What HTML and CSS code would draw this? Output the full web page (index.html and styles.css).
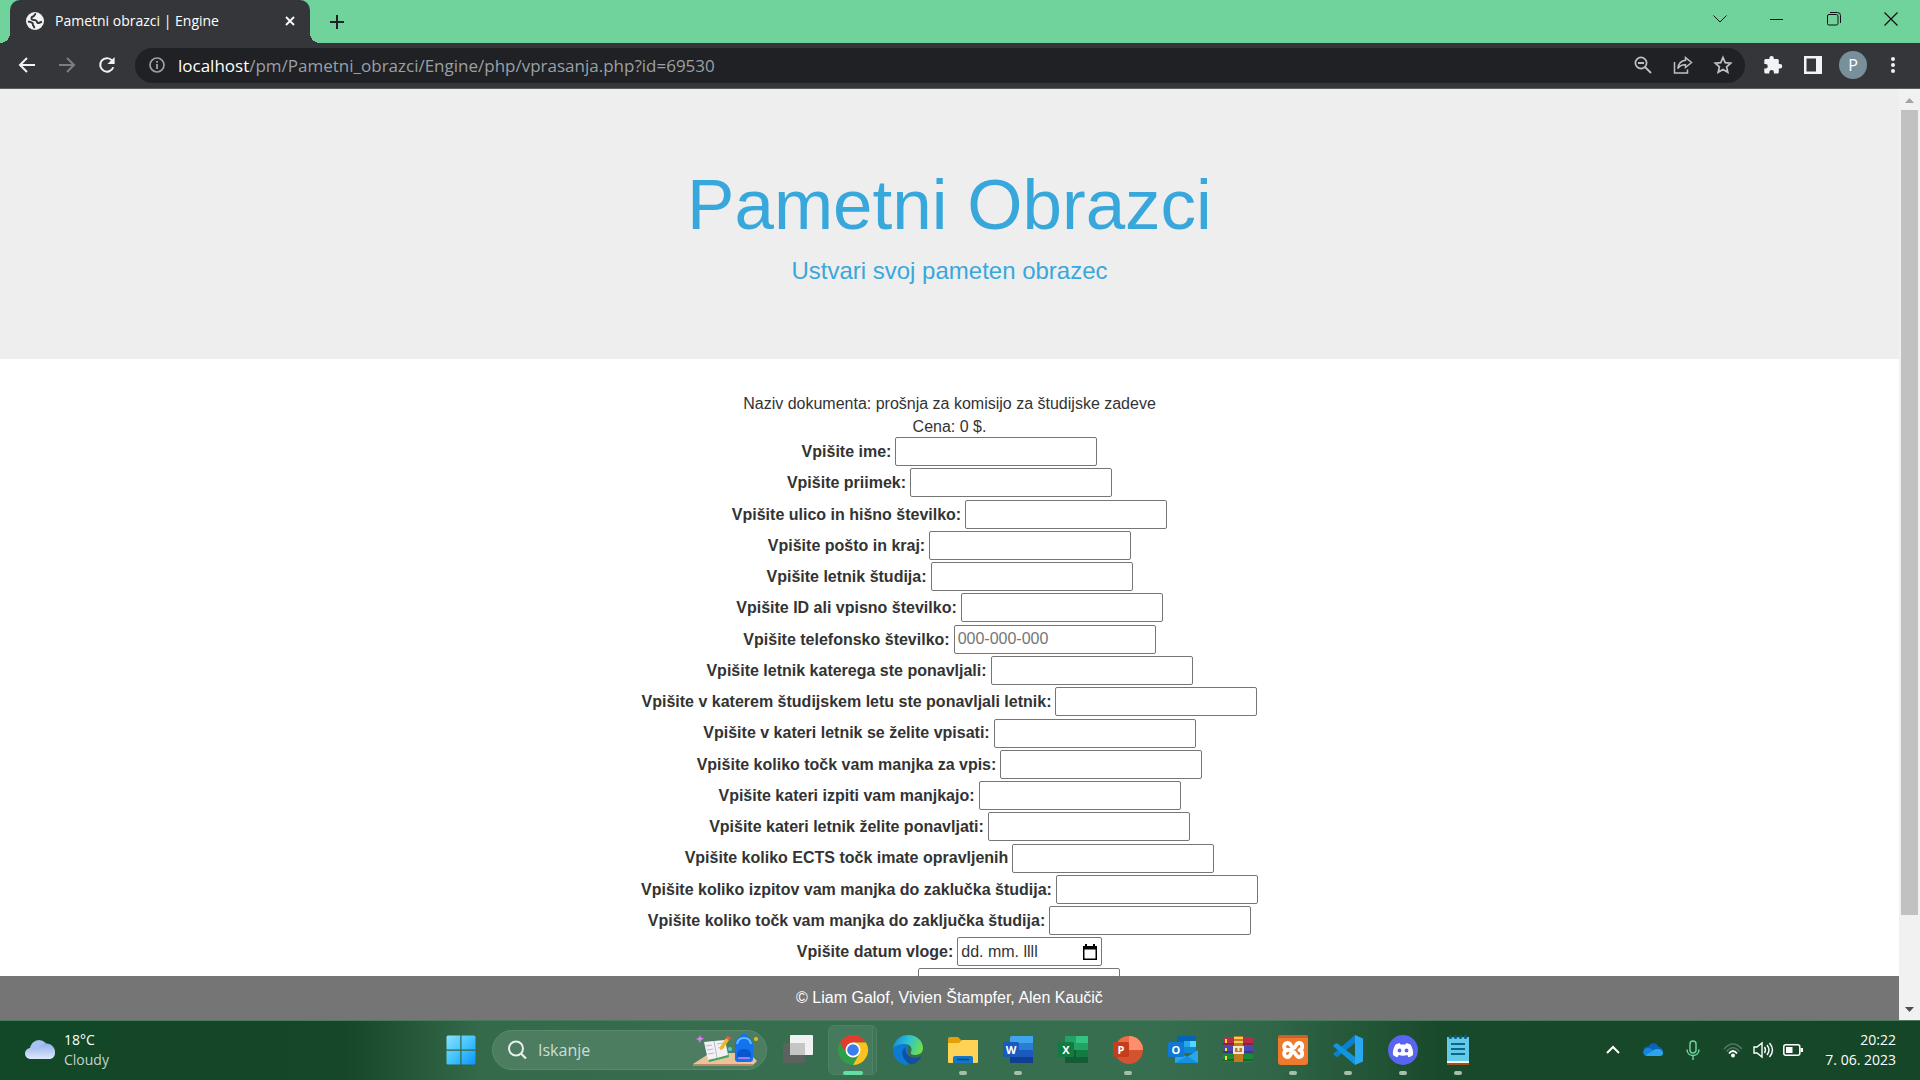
FILE: index.html
```html
<!DOCTYPE html>
<html lang="sl">
<head>
<meta charset="utf-8">
<title>Pametni obrazci | Engine</title>
<link rel="stylesheet" href="styles.css">
</head>
<body>
<header class="tabstrip">
  <div class="tab">
    <svg class="favicon" width="18" height="18" viewBox="0 0 18 18"><circle cx="9" cy="9" r="9" fill="#f1f3f4"/><path d="M10 1.800c-2 .4-1 2.200-3 2.700C5.200 5 5 6.800 6.200 7.600c1.200.6 2.600.2 3.800.9 1.300.9.6 2 1.800 2.500 1.200.3 2.400-.8 4.200-1.200M2 9.400c1.600.2 3.200.5 4.500 1.600 1 1-.2 1.800.8 2.600 1 .6 1 1.400 1 2.600" fill="none" stroke="#35363a" stroke-width="2"/></svg>
    <span class="tab-title">Pametni obrazci | Engine</span>
    <button class="icon-button tab-close" aria-label="Zapri zavihek"><svg width="10" height="10" viewBox="0 0 10 10"><path d="M1 1l8 8M9 1l-8 8" stroke="#fff" stroke-width="1.800"/></svg></button>
  </div>
  <button class="icon-button new-tab" aria-label="Nov zavihek"><svg width="16" height="16" viewBox="0 0 16 16"><path d="M8 1v14M1 8h14" stroke="#202124" stroke-width="2"/></svg></button>
  <div class="window-controls">
    <button class="icon-button" aria-label="Iskanje zavihkov"><svg width="14" height="8" viewBox="0 0 14 8"><path d="M.5.5L7 7 13.500.5" fill="none" stroke="#111"/></svg></button>
    <button class="icon-button" aria-label="Minimiraj"><svg width="13" height="8" viewBox="0 0 13 8"><path d="M0 4.500h13" stroke="#111"/></svg></button>
    <button class="icon-button" aria-label="Obnovi"><svg width="14" height="14" viewBox="0 0 14 14"><g fill="none" stroke="#111"><rect x=".5" y="2.500" width="10.500" height="10.500" rx="1.500"/><path d="M3 .5h7.500q3 0 3 3V11"/></g></svg></button>
    <button class="icon-button" aria-label="Zapri"><svg width="14" height="14" viewBox="0 0 14 14"><path d="M.5.5l13 13M13.500.5l-13 13" stroke="#111" stroke-width="1.200"/></svg></button>
  </div>
</header>

<nav class="toolbar">
  <button class="icon-button nav-button" aria-label="Nazaj"><svg width="18" height="18" viewBox="0 0 18 18"><path d="M17 9H2M9 2L2 9l7 7" fill="none" stroke="#f1f3f4" stroke-width="2"/></svg></button>
  <button class="icon-button nav-button" aria-label="Naprej"><svg width="18" height="18" viewBox="0 0 18 18"><path d="M1 9h15M9 2l7 7-7 7" fill="none" stroke="#7d7e81" stroke-width="2"/></svg></button>
  <button class="icon-button nav-button" aria-label="Osveži"><svg width="18" height="18" viewBox="0 0 20 20"><path d="M17 12.500A7.500 7.500 0 1 1 15.500 4.800" fill="none" stroke="#f1f3f4" stroke-width="2.200"/><path d="M18.500 1v8h-8z" fill="#f1f3f4"/></svg></button>
  <div class="omnibox">
    <svg width="18" height="18" viewBox="0 0 18 18"><circle cx="9" cy="9" r="7" fill="none" stroke="#9aa0a6" stroke-width="1.700"/><path d="M9 8v5M9 5v1.800" stroke="#9aa0a6" stroke-width="1.800"/></svg>
    <span class="url"><span class="host">localhost</span>/pm/Pametni_obrazci/Engine/php/vprasanja.php?id=69530</span>
    <span class="omnibox-actions">
      <button class="icon-button action" aria-label="Povečava"><svg width="18" height="18" viewBox="0 0 18 18"><circle cx="7" cy="7" r="5.600" fill="none" stroke="#bdc1c6" stroke-width="1.700"/><path d="M4 7h6M11 11l6 6" stroke="#bdc1c6" stroke-width="1.800"/></svg></button>
      <button class="icon-button action" aria-label="Deli"><svg width="20" height="20" viewBox="0 0 20 20"><g fill="none" stroke="#bdc1c6" stroke-width="1.500"><path d="M1.500 7v11h13v-3.500"/><path d="M12.500 2.500l6 5-6 5V9.800C9 9.700 6.500 11 4.800 13.500 5.500 8.500 8.500 5.700 12.500 5.300z"/></g></svg></button>
      <button class="icon-button action" aria-label="Dodaj zaznamek"><svg width="20" height="20" viewBox="0 0 20 20"><path d="M10 2.500l2.200 5.100 5.500.5-4.100 3.700 1.200 5.500L10 14.400l-4.800 2.900 1.200-5.500-4.100-3.700 5.500-.5z" fill="none" stroke="#bdc1c6" stroke-width="1.700"/></svg></button>
    </span>
  </div>
  <button class="icon-button nav-button" aria-label="Razširitve"><svg width="20" height="20" viewBox="0 0 20 20"><path d="M17 9h-1.200V5.600c0-.9-.7-1.600-1.600-1.600h-3.400V3.100a2.200 2.200 0 0 0-4.400 0V4H3C2 4 1.300 4.700 1.300 5.600v3.300h1.200a2.300 2.300 0 0 1 0 4.600H1.300v3.400c0 .9.700 1.600 1.700 1.600h3.300v-1.200a2.300 2.300 0 0 1 4.600 0v1.200h3.300c.9 0 1.600-.7 1.600-1.600v-3.400H17A2.200 2.200 0 0 0 17 9z" fill="#f1f3f4"/></svg></button>
  <button class="icon-button nav-button" aria-label="Stranska plošča"><svg width="18" height="18" viewBox="0 0 18 18"><path fill-rule="evenodd" d="M0 0h18v18H0zM2.500 2.500v13H12v-13z" fill="#f1f3f4"/></svg></button>
  <button class="icon-button nav-button" aria-label="Profil"><span class="avatar">P</span></button>
  <button class="icon-button nav-button" aria-label="Meni"><svg width="6" height="18" viewBox="0 0 6 18"><g fill="#f1f3f4"><circle cx="3" cy="3" r="2"/><circle cx="3" cy="9" r="2"/><circle cx="3" cy="15" r="2"/></g></svg></button>
</nav>

<div class="viewport">
  <div class="page">
    <main class="page-scroll">
      <section class="jumbotron">
        <h1>Pametni Obrazci</h1>
        <p class="lead">Ustvari svoj pameten obrazec</p>
      </section>
      <form class="questions">
        <p>Naziv dokumenta: prošnja za komisijo za študijske zadeve</p>
        <p>Cena: 0 $.</p>
        <div class="row"><label for="q1">Vpišite ime:</label><input class="field" id="q1" type="text"></div>
        <div class="row"><label for="q2">Vpišite priimek:</label><input class="field" id="q2" type="text"></div>
        <div class="row"><label for="q3">Vpišite ulico in hišno številko:</label><input class="field" id="q3" type="text"></div>
        <div class="row"><label for="q4">Vpišite pošto in kraj:</label><input class="field" id="q4" type="text"></div>
        <div class="row"><label for="q5">Vpišite letnik študija:</label><input class="field" id="q5" type="text"></div>
        <div class="row"><label for="q6">Vpišite ID ali vpisno številko:</label><input class="field" id="q6" type="text"></div>
        <div class="row"><label for="q7">Vpišite telefonsko številko:</label><input class="field" id="q7" type="tel" placeholder="000-000-000"></div>
        <div class="row"><label for="q8">Vpišite letnik katerega ste ponavljali:</label><input class="field" id="q8" type="text"></div>
        <div class="row"><label for="q9">Vpišite v katerem študijskem letu ste ponavljali letnik:</label><input class="field" id="q9" type="text"></div>
        <div class="row"><label for="q10">Vpišite v kateri letnik se želite vpisati:</label><input class="field" id="q10" type="text"></div>
        <div class="row"><label for="q11">Vpišite koliko točk vam manjka za vpis:</label><input class="field" id="q11" type="text"></div>
        <div class="row"><label for="q12">Vpišite kateri izpiti vam manjkajo:</label><input class="field" id="q12" type="text"></div>
        <div class="row"><label for="q13">Vpišite kateri letnik želite ponavljati:</label><input class="field" id="q13" type="text"></div>
        <div class="row"><label for="q14">Vpišite koliko ECTS točk imate opravljenih</label><input class="field" id="q14" type="text"></div>
        <div class="row"><label for="q15">Vpišite koliko izpitov vam manjka do zaklučka študija:</label><input class="field" id="q15" type="text"></div>
        <div class="row"><label for="q16">Vpišite koliko točk vam manjka do zaključka študija:</label><input class="field" id="q16" type="text"></div>
        <div class="row"><label for="q17">Vpišite datum vloge:</label><span class="field date-field"><input id="q17" type="text" placeholder="dd. mm. llll"><button type="button" class="icon-button" aria-label="Odpri koledar"><svg width="14" height="16" viewBox="0 0 14 16"><path fill-rule="evenodd" d="M0 2h2V0h2v2h6V0h2v2h2v14H0zM1.500 5.500v9h11v-9z" fill="#000"/></svg></button></span></div>
        <div class="row last"><input class="field" id="q18" type="text" aria-label="Vpišite kraj vloge"></div>
      </form>
    </main>
    <footer class="page-footer">© Liam Galof, Vivien Štampfer, Alen Kaučič</footer>
  </div>
  <div class="scrollbar">
    <svg width="9" height="5" viewBox="0 0 9 5"><path d="M0 5L4.500 0 9 5z" fill="#a3a3a3"/></svg>
    <div class="thumb"></div>
    <svg width="9" height="5" viewBox="0 0 9 5"><path d="M0 0l4.500 5L9 0z" fill="#505050"/></svg>
  </div>
</div>

<div class="taskbar">
  <div class="weather">
    <svg width="30" height="20" viewBox="0 0 30 20"><defs><linearGradient id="cloud" x1="0" y1="0" x2="0" y2="1"><stop offset="0" stop-color="#8fb0ec"/><stop offset="1" stop-color="#dfe8fb"/></linearGradient></defs><circle cx="14" cy="9" r="9" fill="#a9c2f3"/><path d="M6 8a6 6 0 0 1 7 3 8 8 0 0 1 17 2c0 4-3 6-6 6H6C-2 19-2 8 6 8z" fill="url(#cloud)"/></svg>
    <div class="two-lines"><span>18°C</span><span class="muted">Cloudy</span></div>
  </div>
  <div class="apps">
    <button class="app" aria-label="Začetek"><svg width="30" height="30" viewBox="0 0 30 30"><defs><linearGradient id="win" x1="0" y1="0" x2="1" y2="1"><stop offset="0" stop-color="#8ae2ff"/><stop offset=".5" stop-color="#45c4fb"/><stop offset="1" stop-color="#0a94fb"/></linearGradient></defs><path d="M2 .5h12.300v14H.5V2Q.5.5 2 .5zM15.500.5H28q1.500 0 1.500 1.500v12.500h-14zM.5 15.700h13.800v13.800H2Q.5 29.500.5 28zM15.500 15.700h14V28q0 1.500-1.500 1.500H15.500z" fill="url(#win)"/></svg></button>
    <label class="search">
      <svg width="20" height="20" viewBox="0 0 20 20"><circle cx="9" cy="8.500" r="7" fill="none" stroke="#e8eeea" stroke-width="2"/><path d="M14 13.500l5 5" stroke="#e8eeea" stroke-width="2.200"/></svg>
      <input type="text" placeholder="Iskanje" aria-label="Iskanje">
      <svg width="66" height="34" viewBox="0 0 66 34"><path d="M0 31L17 20h39l8 8-4 4H0z" fill="#e9c39b"/><path d="M0 31h60v2H0z" fill="#b98a62"/><path d="M7 2l1 2.500L11 5.500 8 7 7 10 5.500 7 3 6l3-1.500z" fill="#e07cf5"/><path d="M12 12l21-4 3 16-20 5z" fill="#3fa35a"/><path d="M11 9l10-1 11-1 3 15-11 3-9 2z" fill="#f3f1f6"/><path d="M21 8l3 17M13 13l6-1M14 17l6-1M15 21l6-1M24 11l6-1M25 15l6-1" stroke="#b9b7c7"/><path d="M27 14l6-9 3 2-6 9-3 1z" fill="#f7b32b"/><path d="M33 5l1.500-2.500L38 5l-1.700 2.500z" fill="#e85a45"/><path d="M48 3V1h6v2q6 3 6 9v14q0 3-3 3H45q-3 0-3-3V12q0-6 6-9z" fill="#1272ef"/><path d="M44 11q1-6 7-6t7 6" fill="none" stroke="#65bafc" stroke-width="2"/><path d="M44 25v-4q1-5 7-5t7 5v4z" fill="#0957cc"/><path d="M45 25h12" stroke="#a47bf7" stroke-width="2"/><circle cx="37" cy="16" r="2" fill="#52cbd3"/><circle cx="63" cy="6" r="2" fill="#f5b914"/></svg>
    </label>
    <button class="app" aria-label="Pogled opravil"><svg width="30" height="30" viewBox="0 0 30 30"><rect y="8" width="22" height="20" rx="1" fill="#5d615f"/><rect x="7" y="0" width="23" height="20" rx="1" fill="#f0f1f0"/><path d="M7 8h15v12H7z" fill="#c3c6c4"/></svg></button>
    <button class="app current" aria-label="Chrome"><svg width="30" height="30" viewBox="0 0 30 30"><circle cx="15" cy="15" r="15" fill="#2f9e4b"/><path d="M2 7.500A15 15 0 0 1 28 7.500H15L8.500 18.800z" fill="#e33b2e"/><path d="M28 7.500A15 15 0 0 1 15 30l6.500-11.300L15 7.500z" fill="#fcc31e"/><circle cx="15" cy="15" r="7.500" fill="#fff"/><circle cx="15" cy="15" r="5.800" fill="#3b7ded"/></svg></button>
    <button class="app" aria-label="Edge"><svg width="30" height="30" viewBox="0 0 30 30"><defs><linearGradient id="edge" x1="0" y1=".2" x2="1" y2=".5"><stop offset="0" stop-color="#1588d8"/><stop offset=".5" stop-color="#2fc3d4"/><stop offset="1" stop-color="#6be04d"/></linearGradient></defs><path d="M0 13c1-5 6-6 10-5 4 0 6 4 4 8l3 9-2 5C6 30-1 22 0 13z" fill="#0c7bd6"/><path d="M0 13C2 4 8 0 15 0c9 0 15 6 15 13 0 5-4 7-8 7-3 0-5-1-4-3 2-4-1-8-6-8C6 9 2 11 0 13z" fill="url(#edge)"/><path d="M12.500 12c-4 3-4 8-1 12 2 3 5 5.500 7.500 5.500 4-1 7-4 9-7 0-1-.6-1-1-.8-8 3.500-16-2-14.500-9.700z" fill="#124f9f"/></svg></button>
    <button class="app open" aria-label="Raziskovalec"><svg width="30" height="30" viewBox="0 0 30 30"><path d="M0 4q0-2 2-2h8l4 4v6H0z" fill="#e3a008"/><path d="M0 8h11l3-3h16v22q0 1-1 1H1q-1 0-1-1z" fill="#fed255"/><path d="M5 28v-5q0-2 2-2h16q2 0 2 2v5z" fill="#1277c9"/><path d="M9 24.500h12" stroke="#0a477f" stroke-width="1.500"/></svg></button>
    <button class="app open" aria-label="Word"><svg width="30" height="30" viewBox="0 0 30 30"><path d="M7 3q0-2 1.500-2H30v7H7z" fill="#41a5ee"/><path d="M7 8h23v7H7z" fill="#2b7cd3"/><path d="M7 15h23v7H7z" fill="#185abd"/><path d="M7 22h23v6H8q-1 0-1-1z" fill="#103f91"/><rect y="7" width="16" height="15" rx="1.500" fill="#185abd"/><text class="glyph" x="8" y="18.500">W</text></svg></button>
    <button class="app" aria-label="Excel"><svg width="30" height="30" viewBox="0 0 30 30"><path d="M7 1h12v14H7z" fill="#21a366"/><path d="M18 1h12v7H18z" fill="#33c481"/><path d="M18 8h12v7H18z" fill="#21a366"/><path d="M7 15h11v13H7z" fill="#185c37"/><path d="M18 15h12v7H18z" fill="#107c41"/><path d="M18 22h12v6H18z" fill="#185c37"/><rect y="7" width="16" height="15" rx="1.500" fill="#107c41"/><text class="glyph" x="8" y="18.500">X</text></svg></button>
    <button class="app open" aria-label="PowerPoint"><svg width="30" height="30" viewBox="0 0 30 30"><circle cx="16" cy="15" r="14" fill="#d35230"/><path d="M16 1A14 14 0 0 0 2 15h14z" fill="#ed6c47"/><path d="M16 1a14 14 0 0 1 14 14H16z" fill="#ff8f6b"/><rect y="7" width="16" height="15" rx="1.500" fill="#c43e1c"/><text class="glyph" x="8" y="18.500">P</text></svg></button>
    <button class="app" aria-label="Outlook"><svg width="30" height="30" viewBox="0 0 30 30"><path d="M9 1h19v17H9z" fill="#0364b8"/><path d="M16 6h6v6h-6z" fill="#28a8ea"/><path d="M22 6h6v6h-6z" fill="#50d9ff"/><path d="M16 12h12v6H16z" fill="#0f87d8"/><path d="M7 15l12 7 11-7v13H7z" fill="#28a8ea"/><path d="M7 28l12-7 11 7z" fill="#1490df"/><rect y="7" width="16" height="15" rx="1.500" fill="#0f78d4"/><text class="glyph" x="8" y="18.500">O</text></svg></button>
    <button class="app" aria-label="WinRAR"><svg width="30" height="30" viewBox="0 0 30 30"><rect y="2" width="30" height="9" rx="1" fill="#b72b4c"/><rect y="11" width="30" height="8" rx="1" fill="#4a49b4"/><rect y="19" width="30" height="8" rx="1" fill="#198a35"/><path d="M0 9h30M0 17h30M0 25h30" stroke="#1a1420" stroke-opacity=".6"/><path d="M3 4v4M3 13v3M3 21v4" stroke="#ffd92e" stroke-width="2"/><rect x="11" y="1" width="9" height="26" fill="#c27a22"/><path d="M11 3h9M11 7h9" stroke="#f4cf52" stroke-width="2"/><rect x="11" y="12" width="9" height="6" fill="none" stroke="#efe6d0" stroke-width="2"/><path d="M15.500 11v5" stroke="#efe6d0" stroke-width="2"/></svg></button>
    <button class="app open" aria-label="XAMPP"><svg width="30" height="30" viewBox="0 0 30 30"><rect width="30" height="30" rx="3" fill="#ee7a2d"/><path d="M0 3q0-3 3-3h24q3 0 3 3z" fill="#c6622a"/><g fill="none" stroke="#fff" stroke-width="3.800" stroke-linejoin="round" stroke-linecap="round"><path d="M14 15H9.500C5 15 5 8 9.500 8c4 0 3 4 6 5 2.500 0 2-5 5.500-5 4 0 4.500 6 .5 7 4 1 3.500 7-.5 7-3.500 0-3-5-6-5-2.500 0-2 5-5.500 5C5 22 5 15 9.500 15"/></g></svg></button>
    <button class="app open" aria-label="VS Code"><svg width="30" height="30" viewBox="0 0 30 30"><path d="M22 0l8 3.500v23L22 30z" fill="#2aa8f2"/><path d="M22 0v8L4.500 22 2.500 21.500 0 19z" fill="#0b80cf"/><path d="M0 11l2.500-2.500h2L22 22v8z" fill="#1294df"/></svg></button>
    <button class="app open" aria-label="Discord"><svg width="30" height="30" viewBox="0 0 30 30"><circle cx="15" cy="15" r="15" fill="#5865f2"/><path d="M11.500 8l1 1.400h5l1-1.400 4 1.500c2 3.500 3 7 2.500 10.500-1.500 1.200-3 1.900-4.500 2.300L19.300 20c-2.800 1-5.800 1-8.600 0l-1.200 2.300C8 21.900 6.500 21.200 5 20c-.5-3.500.5-7 2.500-10.500z" fill="#fff"/><circle cx="11.500" cy="15.500" r="1.900" fill="#5865f2"/><circle cx="18.500" cy="15.500" r="1.900" fill="#5865f2"/></svg></button>
    <button class="app open" aria-label="Beležnica"><svg width="30" height="30" viewBox="0 0 30 30"><path d="M4 2h22v24H4z" fill="#63cbe8"/><path d="M4 26h22v2H4z" fill="#f4f1ec"/><path d="M4 28h22v2H4z" fill="#a4501b"/><path d="M8 9h14M8 14h14M8 19h14" stroke="#0b658c" stroke-width="2"/><g fill="#0c5d7c"><circle cx="7.500" cy="2" r="1.900"/><circle cx="12.500" cy="2" r="1.900"/><circle cx="17.500" cy="2" r="1.900"/><circle cx="22.500" cy="2" r="1.900"/></g></svg></button>
  </div>
  <div class="tray">
    <button class="icon-button tray-button" aria-label="Skrite ikone"><svg width="14" height="10" viewBox="0 0 14 10"><path d="M1 8l6-6 6 6" fill="none" stroke="#fff" stroke-width="2"/></svg></button>
    <button class="icon-button tray-button" aria-label="OneDrive"><svg width="20" height="14" viewBox="0 0 20 14"><path d="M1 8C0 4 4 3 5.500 3.500 8-1 14-.5 15.500 4c3 0 4.500 2 4.500 5z" fill="#0b62bd"/><path d="M4 13C0 13-1 8 2 6c2-2 6-1 8 1l5 6z" fill="#1487da"/><path d="M3 12l8-5c2-2 9-1 9 3 0 3-3 3-3 3H4z" fill="#2ba5ee"/></svg></button>
    <button class="icon-button tray-button" aria-label="Mikrofon"><svg width="14" height="20" viewBox="0 0 14 20"><g fill="none" stroke="#6fd09a" stroke-width="1.500"><rect x="4" y="1" width="6" height="12" rx="3"/><path d="M1 9.500c0 8 12 8 12 0M7 15.500V20"/></g></svg></button>
    <button class="icon-button system-tray" aria-label="Omrežje, zvok, baterija">
      <svg width="20" height="16" viewBox="0 0 20 16"><g fill="none" stroke-width="1.500"><path d="M1 7Q10-3 19 7M3.500 9.500Q10 2 16.500 9.500" stroke="#52795f"/><path d="M6 11.500q4-5 8 0" stroke="#fff" stroke-width="1.800"/></g><circle cx="10" cy="13.500" r="2" fill="#fff"/></svg>
      <svg width="20" height="18" viewBox="0 0 20 18"><g fill="none" stroke="#fff" stroke-width="1.400"><path d="M1 6h3l5-4v14l-5-4H1z"/><path d="M11.500 6q2 3 0 6M14 4q4 5 0 10M16.500 2q6 7 0 14"/></g></svg>
      <svg width="20" height="14" viewBox="0 0 20 14"><rect x=".8" y="1.800" width="16" height="10.500" rx="2" fill="none" stroke="#fff" stroke-width="1.500"/><path d="M3 4h6.500v6H3zM17.500 5H20v4h-2.500z" fill="#fff"/></svg>
    </button>
    <div class="two-lines clock"><span>20:22</span><span>7. 06. 2023</span></div>
  </div>
</div>
</body>
</html>
```
FILE: styles.css
```css
* { box-sizing: border-box; }

body {
  margin: 0;
  height: 100vh;
  display: flex;
  flex-direction: column;
  overflow: hidden;
  background: #fff;
  color: #333;
  font-family: "Liberation Sans", Arial, sans-serif;
  font-size: 16px;
}

svg { display: block; flex: none; overflow: visible; }

button, input { font: inherit; }

.icon-button {
  display: flex;
  align-items: center;
  justify-content: center;
  padding: 0;
  border: 0;
  background: none;
}

/* Browser window */
.tabstrip {
  display: flex;
  height: 43px;
  padding-left: 10px;
  background: #6fd39b;
  font-family: "Open Sans", sans-serif;
}

.tab {
  position: relative;
  display: flex;
  align-items: center;
  width: 300px;
  padding: 0 12px 2px 16px;
  border-radius: 10px 10px 0 0;
  background: #35363a;
  color: #fff;
  font-size: 14px;
}

/* Curved feet where the tab meets the toolbar */
.tab::before,
.tab::after {
  content: "";
  position: absolute;
  bottom: 0;
  width: 10px;
  height: 10px;
}
.tab::before { left: -10px; background: radial-gradient(circle at 0 0, transparent 10px, #35363a 10px); }
.tab::after { right: -10px; background: radial-gradient(circle at 100% 0, transparent 10px, #35363a 10px); }

.tab-title { flex: 1; margin-left: 11px; white-space: nowrap; }
.tab-close { width: 16px; height: 16px; }
.new-tab { width: 34px; margin-left: 10px; }
.window-controls { display: flex; height: 37px; margin-left: auto; padding-right: 1px; }
.window-controls .icon-button { width: 57px; }

.toolbar {
  display: flex;
  align-items: center;
  height: 46px;
  padding: 0 7px 1px 7px;
  border-bottom: 1px solid #5c5d60;
  background: #35363a;
  font-family: "Open Sans", sans-serif;
}

.nav-button { width: 40px; height: 36px; }

.omnibox {
  flex: 1;
  display: flex;
  align-items: center;
  height: 35px;
  margin: 0 8px;
  padding: 0 2px 0 13px;
  border-radius: 18px;
  background: #202124;
  color: #9aa0a6;
  font-size: 17px;
}

.url { margin-left: 12px; white-space: nowrap; }
.host { color: #fff; }
.omnibox-actions { display: flex; margin-left: auto; }
.action { width: 40px; }

.avatar {
  width: 28px;
  height: 28px;
  border-radius: 50%;
  background: #78909c;
  color: #fff;
  font-size: 16px;
  line-height: 28px;
  text-align: center;
}

/* Web page */
.viewport { flex: 1; min-height: 0; display: flex; }
.page { flex: 1; display: flex; flex-direction: column; }
.page-scroll { flex: 1; min-height: 0; overflow: hidden; }

.jumbotron {
  padding: 77px 16px 71px;
  background: #eee;
  color: #38a8dc;
  text-align: center;
}

.jumbotron h1 { margin: 0; font-size: 71px; font-weight: 400; line-height: 78px; }
.lead { margin: 10px 0 0; font-size: 24px; line-height: 34px; }

.questions { padding-top: 33px; text-align: center; }
.questions p { margin: 0; line-height: 23px; }
.questions p + .row { margin-top: -2px; }

.row {
  display: flex;
  justify-content: center;
  align-items: center;
  gap: 4px;
  line-height: 1.955;
}

.row label { font-weight: 700; }
.last { padding-left: 139px; }

.field {
  width: 202px;
  height: 29px;
  padding: 1px 3px;
  border: 1px solid #767676;
  border-radius: 2px;
  background: #fff;
  line-height: 24px;
}

.field::placeholder { color: #757575; }

.date-field { display: flex; align-items: center; width: 145px; padding-right: 4px; }
.date-field input { flex: 1; width: 0; padding: 0; border: 0; outline: 0; }
.date-field input::placeholder { color: #333; }

.page-footer {
  height: 44px;
  background: #757575;
  color: #fff;
  line-height: 43px;
  text-align: center;
}

.scrollbar {
  display: flex;
  flex-direction: column;
  align-items: center;
  width: 21px;
  padding: 9px 0 8px;
  background: #f1f1f1;
}

.thumb { width: 17px; height: 805px; margin: 7px 0 auto; background: #c1c1c1; }

/* Taskbar */
.taskbar {
  display: grid;
  grid-template-columns: 1fr auto 1fr;
  height: 60px;
  border-top: 1px solid #4a7a5d;
  background: linear-gradient(90deg, #124727 0%, #154728 18%, #34694a 25%, #386e50 40%, #386e50 60%, #316648 66%, #19492b 75%, #154628 100%);
  color: #fff;
  font-family: "Open Sans", sans-serif;
  font-size: 14px;
}

.weather { display: flex; align-items: center; gap: 9px; padding: 0 0 2px 25px; }
.two-lines { display: flex; flex-direction: column; line-height: 20px; }
.muted { color: #c3d3c9; }
.apps { display: flex; align-items: center; padding: 0 2px 1px 0; }

.app {
  position: relative;
  display: flex;
  align-items: center;
  justify-content: center;
  width: 55px;
  height: 50px;
  padding: 0;
  border: 0;
  background: none;
}

/* Running indicator below the icon */
.open::after,
.current::after {
  content: "";
  position: absolute;
  bottom: 0;
  width: 8px;
  height: 4px;
  border-radius: 2px;
  background: #a6bdb0;
}
.current::after { width: 20px; background: #62dfa2; }

/* Stacked card behind the active app */
.current::before {
  content: "";
  position: absolute;
  z-index: -1;
  inset: 0 3px;
  border: 1px solid #4f8164;
  border-radius: 6px;
  background: linear-gradient(90deg, #457a5c 43px, #4f8164 43px 44px, #3f7557 44px);
}
.current { z-index: 0; }

.glyph {
  fill: #fff;
  font-family: "Open Sans", sans-serif;
  font-size: 11px;
  font-weight: 700;
  text-anchor: middle;
}

.search {
  display: flex;
  align-items: center;
  width: 275px;
  height: 40px;
  margin: 0 3px 0 4px;
  padding: 0 7px 0 14px;
  border: 1px solid #5a8a6e;
  border-radius: 20px;
  background: #4c7d61;
}

.search input {
  flex: 1;
  width: 0;
  margin-left: 11px;
  padding: 0;
  border: 0;
  outline: 0;
  background: none;
  color: #fff;
  font-size: 16px;
}
.search input::placeholder { color: #cfddd5; }

.tray { display: flex; align-items: center; justify-content: flex-end; padding: 0 24px 2px 0; }
.tray-button { width: 40px; height: 40px; }
.system-tray { gap: 10px; height: 40px; margin: 0 22px 0 10px; }
.clock { text-align: right; }
```
